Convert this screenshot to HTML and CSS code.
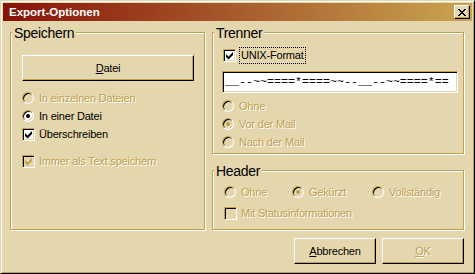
FILE: index.html
```html
<!DOCTYPE html>
<html lang="de">
<head>
<meta charset="utf-8">
<title>Export-Optionen</title>
<link rel="stylesheet" href="styles.css">
</head>
<body>
<div class="window">
  <div class="titlebar">
    <span class="title">Export-Optionen</span>
    <span class="close"><svg width="8" height="7" viewBox="0 0 8 7" shape-rendering="crispEdges"><path d="M0 0h2v1H0z M6 0h2v1H6z M1 1h2v1H1z M5 1h2v1H5z M2 2h4v1H2z M3 3h2v1H3z M2 4h4v1H2z M1 5h2v1H1z M5 5h2v1H5z M0 6h2v1H0z M6 6h2v1H6z" fill="#000"/></svg></span>
  </div>
  <div class="content">
    <div class="columns">
      <div class="group speichern">
        <div class="legend">Speichern</div>
        <div class="gbody">
          <div class="button datei"><span><u>D</u>atei</span></div>
          <div class="opt disabled first"><span class="radio"></span><span>In einzelnen Dateien</span></div>
          <div class="opt"><span class="radio on"></span><span>In einer Datei</span></div>
          <div class="opt"><span class="check"><svg width="11" height="11" viewBox="1 1 11 11"><polygon points="3,5 5.5,7.5 10,3 10,6 5.5,10.5 3,8" fill="currentColor"/></svg></span><span>Überschreiben</span></div>
          <div class="opt disabled sep"><span class="check"><svg width="11" height="11" viewBox="1 1 11 11"><polygon points="3,5 5.5,7.5 10,3 10,6 5.5,10.5 3,8" fill="currentColor"/></svg></span><span>Immer als Text speichern</span></div>
        </div>
      </div>
      <div class="rightcol">
        <div class="group trenner">
          <div class="legend">Trenner</div>
          <div class="gbody">
            <div class="opt unix"><span class="check"><svg width="11" height="11" viewBox="1 1 11 11"><polygon points="3,5 5.5,7.5 10,3 10,6 5.5,10.5 3,8" fill="currentColor"/></svg></span><span class="focus">UNIX-Format</span></div>
            <div class="textbox">__--~~====*====~~--__--~~====*==</div>
            <div class="radios">
              <div class="opt disabled"><span class="radio"></span><span>Ohne</span></div>
              <div class="opt disabled"><span class="radio on"></span><span>Vor der Mail</span></div>
              <div class="opt disabled"><span class="radio"></span><span>Nach der Mail</span></div>
            </div>
          </div>
        </div>
        <div class="group header">
          <div class="legend">Header</div>
          <div class="gbody">
            <div class="hrow">
              <div class="opt disabled"><span class="radio"></span><span>Ohne</span></div>
              <div class="opt disabled"><span class="radio on"></span><span>Gekürzt</span></div>
              <div class="opt disabled"><span class="radio"></span><span>Vollständig</span></div>
            </div>
            <div class="opt disabled status"><span class="check"></span><span>Mit Statusinformationen</span></div>
          </div>
        </div>
      </div>
    </div>
    <div class="buttons">
      <div class="button"><span><u>A</u>bbrechen</span></div>
      <div class="button disabled"><span><u>O</u>K</span></div>
    </div>
  </div>
</div>
</body>
</html>
```

FILE: styles.css
```css
html, body {
  margin: 0;
  padding: 0;
}
body {
  background: #e5d7ad;
  font-family: "Liberation Sans", Arial, sans-serif;
  font-size: 11px;
  letter-spacing: -0.2px;
  color: #000;
}
.window {
  width: 475px;
  height: 274px;
  box-sizing: border-box;
  border: 1px solid;
  border-color: #e5d7ad #000 #000 #e5d7ad;
  box-shadow: inset 1px 1px 0 #fff, inset -1px -1px 0 #c0a050;
  padding: 2px;
  background: #e5d7ad;
  display: flex;
  flex-direction: column;
}
.titlebar {
  height: 18px;
  flex: none;
  display: flex;
  align-items: center;
  justify-content: space-between;
  padding: 0 2px 0 6px;
  background: linear-gradient(90deg, #861208 0%, #c9a550 100%);
}
.title {
  color: #fff;
  font-weight: bold;
  font-size: 11.5px;
  line-height: 13px;
  letter-spacing: 0;
}
.close {
  width: 16px;
  height: 14px;
  box-sizing: border-box;
  border: 1px solid;
  border-color: #fff #000 #000 #fff;
  box-shadow: inset -1px -1px 0 #c0a050;
  background: #e5d7ad;
  padding: 3px 0 0 3px;
}
.close svg {
  display: block;
}
.content {
  flex: 1;
  display: flex;
  flex-direction: column;
  padding: 11px 8px 7px 7px;
}
.columns {
  display: flex;
  gap: 7px;
  height: 198px;
}
.group {
  box-sizing: border-box;
  border: 1px solid #c0a050;
  box-shadow: 1px 1px 0 #fff, inset 1px 1px 0 #fff;
  display: flex;
  flex-direction: column;
}
.legend {
  align-self: flex-start;
  margin: -8px 0 0 1px;
  padding: 0 2px;
  background: #e5d7ad;
  font-size: 14px;
  line-height: 16px;
  letter-spacing: -0.3px;
}
.speichern {
  width: 195px;
}
.speichern .gbody {
  padding: 14px 10px 0 11px;
}
.rightcol {
  width: 252px;
  display: flex;
  flex-direction: column;
}
.trenner .gbody {
  padding: 6px 5px 2px 9px;
}
.header {
  margin-top: 16px;
  flex: 1;
}
.header .gbody {
  padding: 4px 5px 0 11px;
}
.button {
  height: 26px;
  box-sizing: border-box;
  border: 1px solid;
  border-color: #fff #000 #000 #fff;
  box-shadow: inset -1px -1px 0 #c0a050;
  background: #e5d7ad;
  display: flex;
  align-items: center;
  justify-content: center;
}
.opt {
  display: flex;
  align-items: center;
  height: 18px;
  gap: 5px;
}
.opt .check + span {
  margin-left: -1px;
}
.speichern .first {
  margin-top: 8px;
}
.speichern .sep {
  margin-top: 9px;
}
.disabled {
  color: #c0a050;
  text-shadow: 1px 1px 0 #fff;
}
.radio {
  flex: none;
  width: 12px;
  height: 12px;
  box-sizing: border-box;
  border-radius: 50%;
  border: 1px solid;
  border-color: #c0a050 #fff #fff #c0a050;
  box-shadow: inset 1px 1px 0 #000, inset -1px -1px 0 #e5d7ad;
  background: #fff;
  display: flex;
  align-items: center;
  justify-content: center;
}
.radio.on::after {
  content: "";
  width: 4px;
  height: 4px;
  border-radius: 50%;
  background: #000;
}
.disabled .radio {
  background: #e5d7ad;
}
.disabled .radio.on::after {
  background: #c0a050;
}
.check {
  flex: none;
  width: 13px;
  height: 13px;
  box-sizing: border-box;
  border: 1px solid;
  border-color: #c0a050 #fff #fff #c0a050;
  box-shadow: inset 1px 1px 0 #000, inset -1px -1px 0 #e5d7ad;
  background: #fff;
  color: #000;
}
.check svg {
  display: block;
}
.disabled .check {
  background: #e5d7ad;
  color: #c0a050;
}
.unix {
  height: 17px;
  margin-left: 1px;
  gap: 3px;
}
.unix .check + span {
  margin-left: 0;
}
.focus {
  border: 1px dotted #000;
  padding: 1px 1px;
  line-height: 13px;
}
.textbox {
  margin-top: 7px;
  height: 22px;
  box-sizing: border-box;
  border: 1px solid;
  border-color: #c0a050 #fff #fff #c0a050;
  box-shadow: inset 1px 1px 0 #000, inset -1px -1px 0 #e5d7ad;
  background: #fff;
  padding-left: 2px;
  font-family: "Liberation Mono", "Courier New", monospace;
  font-size: 11.67px;
  letter-spacing: 0;
  line-height: 20px;
  white-space: pre;
  overflow: hidden;
}
.radios {
  margin-top: 4px;
}
.hrow {
  display: grid;
  grid-template-columns: 68px 80px auto;
}
.status {
  margin-top: 3px;
}
.buttons {
  display: flex;
  justify-content: flex-end;
  gap: 6px;
  margin-top: 8px;
}
.buttons .button {
  width: 82px;
}
```
